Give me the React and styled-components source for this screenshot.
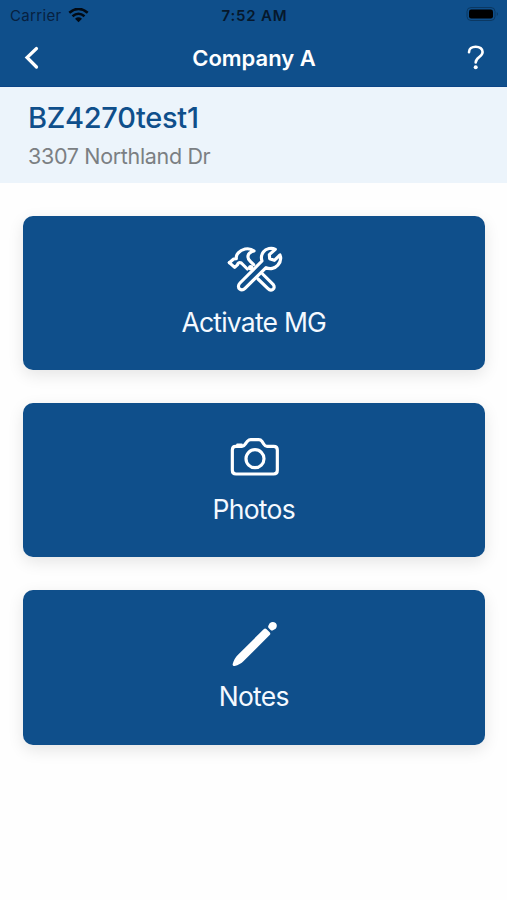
import React from "react";
import styled, { createGlobalStyle } from "styled-components";

const GlobalStyle = createGlobalStyle`
  * {
    box-sizing: border-box;
  }
  body {
    margin: 0;
    background-color: #ffffff;
    font-family: Inter, "Liberation Sans", sans-serif;
  }
`;

const Container = styled.div`
  min-height: 900px;
  background-color: #fefefe;
`;

const Header = styled.header`
  height: 87px;
  background-color: #0f4f8b;
  border-bottom: 1px solid #0b4587;
`;

const StatusBar = styled.div`
  display: grid;
  grid-template-columns: 1fr auto 1fr;
  align-items: center;
  height: 30px;
  padding: 0 8px 0 10px;
  color: #06182c;
`;

const Carrier = styled.div`
  display: flex;
  align-items: center;
  gap: 6px;
  font-size: 15px;
  letter-spacing: 0.35px;
  color: #072140;
`;

const Clock = styled.div`
  font-size: 15px;
  font-weight: 600;
  letter-spacing: 0.8px;
`;

const Battery = styled.svg`
  justify-self: end;
`;

const NavBar = styled.nav`
  display: grid;
  grid-template-columns: 1fr auto 1fr;
  align-items: center;
  height: 56px;
  padding: 0 22px 0 23px;
  color: #ffffff;
`;

const NavButton = styled.button`
  display: flex;
  justify-self: ${({ $side }) => $side};
  padding: 0;
  border: none;
  background: none;
  color: inherit;
  cursor: pointer;
`;

const Title = styled.h1`
  margin: 0;
  font-size: 22px;
  font-weight: 600;
  letter-spacing: 0;
`;

const Site = styled.section`
  height: 96px;
  padding: 13px 28px 0;
  background-color: #ecf4fb;
`;

const SiteName = styled.div`
  font-size: 29px;
  font-weight: 500;
  line-height: 36px;
  letter-spacing: -0.3px;
  color: #0f4f8b;
`;

const Address = styled.div`
  margin-top: 7px;
  font-size: 21.5px;
  line-height: 26px;
  letter-spacing: -0.33px;
  color: #7b7f83;
`;

const Actions = styled.main`
  display: flex;
  flex-direction: column;
  gap: 32.6px;
  padding: 32.5px 22px 0 22.5px;
`;

const Card = styled.button`
  display: flex;
  flex-direction: column;
  align-items: center;
  height: 154.7px;
  padding: 19.5px 0 0;
  border: none;
  border-radius: 10px;
  background-color: #0f4f8b;
  box-shadow: 0 5px 16px rgba(0, 0, 0, 0.1);
  color: #f4f9ff;
  font-family: inherit;
  cursor: pointer;
`;

const CardIcon = styled.svg`
  width: 80px;
  height: 65px;
  margin-left: 2px;
  flex-shrink: 0;
`;

const Label = styled.span`
  margin-top: 4.6px;
  font-size: 26.5px;
  line-height: 34px;
  letter-spacing: ${({ $spacing }) => $spacing || "-0.7px"};
`;

function WifiIcon() {
  return (
    <svg width="21" height="15" viewBox="0 0 21 15" fill="none" stroke="#020a14">
      <path d="M1.3 4.7Q10.5-2.9 19.7 4.7" strokeWidth="2.6" />
      <path d="M4.5 8.2Q10.5 3.3 16.5 8.2" strokeWidth="2.6" />
      <path d="M7 10.7Q10.5 8 14 10.7L10.5 14.2Z" fill="#020a14" stroke="none" />
    </svg>
  );
}

function ToolsIcon() {
  return (
    <CardIcon
      viewBox="0 0 240 195"
      fill="none"
      stroke="#ffffff"
      strokeWidth="9.5"
      strokeLinecap="round"
      strokeLinejoin="round"
    >
      <path d="M43 83 56 72L64 71C62 59 73 46 90 42C100 40 110 42 117 48C105 51 98 58 99 67C99 71 102 75 106 79L116 89" />
      <path d="M43 83 59 97 68 89C67 84 73 81 79 84L97 102" />
      <circle cx="107" cy="98" r="4" strokeWidth="8" />
      <path d="M143 117 175 149C179 154 178 160 174 163C169 166 163 165 159 161L129 132" />
      <path d="M181 43C170 37 153 40 145 51C139 59 138 69 141 78L75 144C69 150 69 158 74 162C79 166 85 165 90 160L153 98C165 103 180 101 188 91C196 82 199 70 195 60L178 76L164 71L163 59Z" />
    </CardIcon>
  );
}

function CameraIcon() {
  return (
    <CardIcon viewBox="0 0 240 195" fill="none" stroke="#ffffff" strokeWidth="9.5" strokeLinejoin="round">
      <path d="M62 73H81C87 73 89 69 93 63L98 57C101 54 103 53 107 53H131C135 53 138 54 141 58L146 66C149 71 151 73 156 73H176C183 73 187 77 187 84V145C187 152 183 156 176 156H63C56 156 52 152 52 145V84C52 77 56 73 62 73Z" />
      <path d="M67 68H80" strokeWidth="7" strokeLinecap="round" />
      <circle cx="120" cy="110" r="27" />
    </CardIcon>
  );
}

function PencilIcon() {
  return (
    <CardIcon viewBox="0 0 240 195" fill="#ffffff">
      <path d="M146 58Q150 53 154 57L164 67Q168 71 164 75L86 153C79 160 70 166 59 168Q52 169 53 162C56 151 61 142 69 134Z" />
      <path d="M160 47 164 40Q173 32 182 39Q189 47 182 56L174 61Q170 63 166 59L161 54Q158 51 160 47Z" />
    </CardIcon>
  );
}

export default function App() {
  return (
    <Container>
      <GlobalStyle />
      <Header>
        <StatusBar>
          <Carrier>
            Carrier
            <WifiIcon />
          </Carrier>
          <Clock>7:52 AM</Clock>
          <Battery width="33" height="16" viewBox="0 0 33 16">
            <rect x="1" y="0.5" width="28" height="13" rx="4" fill="none" stroke="#0b3862" />
            <rect x="3" y="2.5" width="24" height="9" rx="2.2" fill="#000000" />
            <path d="M30.8 5Q33 7 30.8 9Z" fill="#0b3862" />
          </Battery>
        </StatusBar>
        <NavBar>
          <NavButton $side="start" aria-label="Back">
            <svg width="16" height="24" viewBox="0 0 16 24" fill="none" stroke="currentColor" strokeWidth="3.2">
              <path d="M13.5 2.5 4 11.5 13.5 21" strokeLinecap="round" />
            </svg>
          </NavButton>
          <Title>Company A</Title>
          <NavButton $side="end" aria-label="Help">
            <svg width="18" height="26" viewBox="0 0 18 26" fill="none" stroke="currentColor" strokeWidth="2.6">
              <path d="M2 7.2C2 3.5 5 1.7 8.7 1.7C12.7 1.7 15.6 3.7 15.6 7C15.6 12 8.7 12 8.7 17.5" strokeLinecap="round" />
              <circle cx="8.7" cy="22.3" r="2" fill="currentColor" stroke="none" />
            </svg>
          </NavButton>
        </NavBar>
      </Header>
      <Site>
        <SiteName>BZ4270test1</SiteName>
        <Address>3307 Northland Dr</Address>
      </Site>
      <Actions>
        <Card>
          <ToolsIcon />
          <Label $spacing="-0.78px">Activate MG</Label>
        </Card>
        <Card>
          <CameraIcon />
          <Label>Photos</Label>
        </Card>
        <Card>
          <PencilIcon />
          <Label>Notes</Label>
        </Card>
      </Actions>
    </Container>
  );
}
